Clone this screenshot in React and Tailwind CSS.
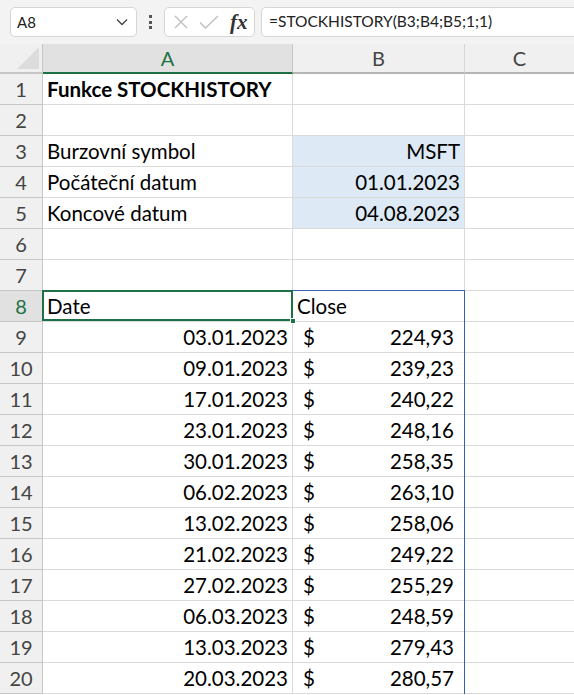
import React from 'react';

const rows = [
  ['03.01.2023', '224,93'],
  ['09.01.2023', '239,23'],
  ['17.01.2023', '240,22'],
  ['23.01.2023', '248,16'],
  ['30.01.2023', '258,35'],
  ['06.02.2023', '263,10'],
  ['13.02.2023', '258,06'],
  ['21.02.2023', '249,22'],
  ['27.02.2023', '255,29'],
  ['06.03.2023', '248,59'],
  ['13.03.2023', '279,43'],
  ['20.03.2023', '280,57'],
];

function RowHead({ n, active }) {
  return (
    <div
      className={`w-[43px] shrink-0 h-full flex items-center justify-center border-r border-b border-[#c6c6c6] text-[20px] ${
        active ? 'bg-[#e1e1e1] text-[#1e7145]' : 'bg-[#f0f0f0] text-[#444]'
      }`}
    >
      {n}
    </div>
  );
}

function Row({ n, a, b, c, aClass = '', bClass = '', active }) {
  return (
    <div className="flex h-[31px]">
      <RowHead n={n} active={active} />
      <div className={`relative w-[250px] shrink-0 border-r border-b border-[#dadada] flex items-center px-[4px] ${aClass}`}>
        {a}
      </div>
      <div className={`relative w-[172px] shrink-0 border-r border-b border-[#dadada] flex items-center px-[4px] ${bClass}`}>
        {b}
      </div>
      <div className="flex-1 border-b border-[#dadada]">{c}</div>
    </div>
  );
}

export default function App() {
  return (
    <div
      className="w-[574px] h-[695px] overflow-hidden bg-white text-black"
      style={{ fontFamily: 'Lato, "Open Sans", sans-serif' }}
    >
      {/* formula bar */}
      <div className="h-[44px] bg-[#f3f3f3] flex items-center pl-[10px]">
        <div className="w-[127px] h-[30px] bg-white rounded-[5px] border border-[#d6d6d6] flex items-center justify-between pl-[6px] pr-[8px] text-[15px] text-[#222]">
          <span>A8</span>
          <svg width="12" height="8" viewBox="0 0 12 8" fill="none" stroke="#444" strokeWidth="1.3">
            <path d="M1 1.5 L6 6.5 L11 1.5" />
          </svg>
        </div>
        <div className="w-[27px] flex flex-col items-center gap-[2.5px]">
          <span className="w-[3px] h-[3px] bg-[#555]" />
          <span className="w-[3px] h-[3px] bg-[#555]" />
          <span className="w-[3px] h-[3px] bg-[#555]" />
        </div>
        <div className="w-[91px] h-[30px] bg-white rounded-[5px] border border-[#d6d6d6] flex items-center pl-[8px] pr-[5px] gap-[10px]">
          <svg width="16" height="16" viewBox="0 0 16 16" stroke="#bdbdbd" strokeWidth="1.3">
            <path d="M2 2 L14 14 M14 2 L2 14" />
          </svg>
          <svg width="20" height="16" viewBox="0 0 20 16" fill="none" stroke="#bdbdbd" strokeWidth="1.3">
            <path d="M1 8.5 L6.5 14 L19 2" />
          </svg>
          <span
            className="text-[21px] italic font-bold text-[#333] leading-none ml-[1px]"
            style={{ fontFamily: '"Liberation Serif", serif' }}
          >
            fx
          </span>
        </div>
        <div className="flex-1 h-[30px] ml-[6px] bg-white rounded-l-[5px] border border-r-0 border-[#d6d6d6] flex items-center pl-[7px] text-[15.5px] text-[#222]">
          =STOCKHISTORY(B3;B4;B5;1;1)
        </div>
      </div>

      {/* column headers */}
      <div className="flex h-[30px] text-[20px] text-[#444]">
        <div className="w-[43px] shrink-0 bg-[#f0f0f0] border-r border-b-2 border-[#c6c6c6] relative">
          <svg className="absolute right-[3px] bottom-[3px]" width="22" height="22" viewBox="0 0 22 22">
            <path d="M22 0 L22 22 L0 22 Z" fill="#dcdcdc" />
          </svg>
        </div>
        <div className="w-[250px] shrink-0 bg-[#e1e1e1] border-r border-[#c6c6c6] border-b-2 border-b-[#1e7145] flex items-center justify-center text-[#1e7145]">
          A
        </div>
        <div className="w-[172px] shrink-0 bg-[#f0f0f0] border-r border-[#d6d6d6] border-b-2 border-b-[#b5b5b5] flex items-center justify-center">
          B
        </div>
        <div className="flex-1 bg-[#f0f0f0] border-b-2 border-b-[#b5b5b5] flex items-center justify-center">
          C
        </div>
      </div>

      <div className="text-[20.5px]">
        <Row n={1} a={<span className="font-bold">Funkce STOCKHISTORY</span>} />
        <Row n={2} />
        <Row n={3} a="Burzovní symbol" b="MSFT" bClass="justify-end bg-[#dde9f5]" />
        <Row n={4} a="Počáteční datum" b="01.01.2023" bClass="justify-end bg-[#dde9f5]" />
        <Row n={5} a="Koncové datum" b="04.08.2023" bClass="justify-end bg-[#dde9f5]" />
        <Row n={6} />
        <Row n={7} />
        <Row
          n={8}
          active
          a={
            <>
              <span>Date</span>
              <div className="absolute -left-[1px] -top-[1px] -right-[1px] bottom-0 border-2 border-[#1e7145] pointer-events-none z-10" />
              <div className="absolute -right-[4px] -bottom-[3px] w-[6px] h-[6px] bg-[#1e7145] border border-white z-20" />
            </>
          }
          b={
            <>
              <span>Close</span>
              <div className="absolute -left-[1px] -top-[1px] -right-[1px] bottom-0 border-t border-r border-[#3a5fae] pointer-events-none" />
            </>
          }
        />
        {rows.map(([d, v], i) => (
          <Row
            key={i}
            n={9 + i}
            a={d}
            aClass="justify-end"
            b={
              <>
                <span className="pl-[6px]">$</span>
                <span className="ml-auto pr-[6px]">{v}</span>
                <div className="absolute -right-[1px] -top-[1px] bottom-[-1px] border-r border-[#3a5fae] pointer-events-none" />
              </>
            }
          />
        ))}
      </div>
    </div>
  );
}
